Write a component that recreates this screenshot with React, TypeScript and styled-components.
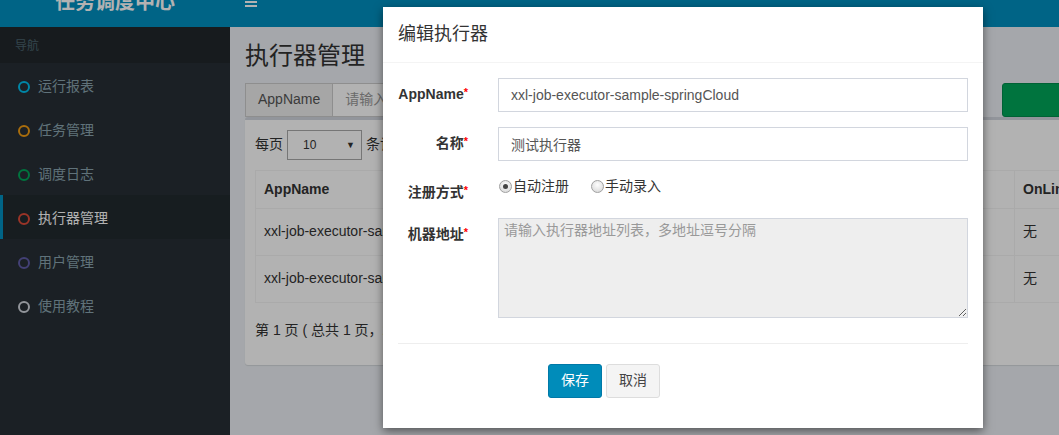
import React from "react";
import styled, { createGlobalStyle } from "styled-components";

const GlobalStyle = createGlobalStyle`
  html, body { margin: 0; padding: 0; overflow: hidden; background: #a5a8ab; }
  body {
    font-family: "Liberation Sans", "Noto Sans CJK SC", sans-serif;
    font-size: 14px;
    color: #333;
    line-height: 1.42857;
  }
  * { box-sizing: border-box; }
`;

const Page = styled.div`
  position: relative;
  width: 1366px;
  height: 435px;
  display: grid;
  grid-template-columns: 230px 1fr;
  grid-template-rows: 27px 1fr;
  overflow: hidden;
`;

const Logo = styled.div`
  background: #0090c1;
  display: flex;
  align-items: flex-end;
  overflow: hidden;
`;

const LogoText = styled.div`
  width: 100%;
  height: 50px;
  flex: none;
  line-height: 50px;
  text-align: center;
  font-size: 20px;
  font-weight: bold;
  color: #fff;
`;

const Navbar = styled.div`
  background: #0090c1;
  display: flex;
  align-items: flex-end;
  overflow: hidden;
`;

const Toggle = styled.div`
  margin-left: 15px;
  padding-bottom: 20px;
  display: flex;
  flex-direction: column;
  gap: 2px;
`;

const Bar = styled.span`
  display: block;
  width: 12px;
  height: 2px;
  background: #fff;
`;

const Sidebar = styled.aside`
  background: #272f35;
  display: flex;
  flex-direction: column;
`;

const SidebarHeader = styled.div`
  height: 36px;
  padding: 4px 15px 0;
  display: flex;
  align-items: center;
  background: #22282c;
  color: #4b646f;
  font-size: 12px;
`;

const MenuItem = styled.div<{ $active?: boolean }>`
  height: 44px;
  display: flex;
  align-items: center;
  gap: 8px;
  padding-top: 4px;
  padding-left: ${(p) => (p.$active ? "15px" : "18px")};
  border-left: ${(p) => (p.$active ? "3px solid #0090c1" : "none")};
  background: ${(p) => (p.$active ? "#222a2e" : "transparent")};
  color: ${(p) => (p.$active ? "#fff" : "#8aa4af")};
  font-size: 14px;
`;

const Ring = styled.span<{ $color: string }>`
  width: 12px;
  height: 12px;
  border-radius: 50%;
  border: 2px solid ${(p) => p.$color};
  flex: none;
`;

const Content = styled.main`
  background: #ecf0f5;
  padding: 15px;
  display: flex;
  flex-direction: column;
`;

const Title = styled.h1`
  margin: 1px 0 14px;
  font-size: 24px;
  font-weight: normal;
  line-height: 1.1;
  color: #333;
`;

const SearchRow = styled.div`
  display: grid;
  grid-template-columns: repeat(6, 1fr);
  margin: 0 -15px;
`;

const Col = styled.div<{ $span?: number; $start?: number }>`
  padding: 0 15px;
  grid-column: ${(p) => (p.$start ? `${p.$start} / span ${p.$span || 1}` : `span ${p.$span || 1}`)};
`;

const InputGroup = styled.div`
  display: flex;
  height: 34px;
`;

const Addon = styled.span`
  display: flex;
  align-items: center;
  padding: 0 12px;
  background: #eee;
  border: 1px solid #ccc;
  color: #555;
`;

const GroupInput = styled.div`
  flex: 1;
  display: flex;
  align-items: center;
  padding: 0 12px;
  border: 1px solid #ccc;
  border-left: none;
  background: #fff;
  color: #999;
`;

const SuccessButton = styled.div`
  height: 34px;
  border-radius: 3px;
  background: #00a65a;
  border: 1px solid #008d4c;
  color: #fff;
  display: flex;
  align-items: center;
  justify-content: center;
`;

const Box = styled.section`
  background: #fff;
  border-top: 3px solid #d2d6de;
  border-radius: 3px;
  box-shadow: 0 1px 1px rgba(0, 0, 0, 0.1);
  padding: 10px;
`;

const LengthRow = styled.div`
  display: flex;
  align-items: center;
  height: 30px;
  gap: 4px;
`;

const Select = styled.div`
  width: 75px;
  height: 30px;
  border: 1px solid #aaa;
  display: flex;
  align-items: center;
  justify-content: space-between;
  padding: 0 6px 0 15px;
  font-size: 12px;
  color: #333;
`;

const Arrow = styled.span`
  font-size: 9px;
`;

const Table = styled.table`
  margin-top: 10px;
  border-collapse: collapse;
  table-layout: fixed;
  width: 1086px;
`;

const Th = styled.th`
  height: 38px;
  padding: 1px 8px 0;
  border: 1px solid #f4f4f4;
  text-align: left;
  font-weight: bold;
  color: #333;
`;

const Td = styled.td`
  height: 47px;
  padding: 0 8px;
  border: 1px solid #f4f4f4;
  color: #333;
  white-space: nowrap;
  overflow: hidden;
`;

const Info = styled.div`
  padding: 18px 0 14px;
  color: #333;
`;

const Overlay = styled.div`
  position: absolute;
  inset: 0;
  background: rgba(0, 0, 0, 0.3);
  display: flex;
  justify-content: center;
  align-items: flex-start;
  padding-top: 7px;
`;

const Modal = styled.div`
  width: 600px;
  background: #fff;
  box-shadow: 0 3px 9px rgba(0, 0, 0, 0.5);
`;

const ModalHeader = styled.div`
  padding: 15px;
  border-bottom: 1px solid #f4f4f4;
`;

const ModalTitle = styled.h4`
  margin: 0;
  font-size: 18px;
  font-weight: normal;
  line-height: 25px;
  color: #333;
`;

const ModalBody = styled.div`
  padding: 15px 0;
`;

const FormRow = styled.div<{ $minHeight?: number }>`
  display: grid;
  grid-template-columns: 100px 500px;
  margin-bottom: 15px;
  min-height: ${(p) => (p.$minHeight ? `${p.$minHeight}px` : "auto")};
`;

const Label = styled.label`
  padding: 7px 15px 0;
  text-align: right;
  font-weight: bold;
  color: #333;
`;

const Star = styled.span`
  color: red;
  font-size: 11px;
  vertical-align: top;
  line-height: 14px;
`;

const Field = styled.div`
  padding: 0 15px;
`;

const TextInput = styled.input`
  display: block;
  width: 100%;
  height: 34px;
  padding: 6px 12px;
  border: 1px solid #d2d6de;
  border-radius: 0;
  font: inherit;
  color: #555;
  outline: none;
`;

const TextArea = styled.textarea`
  display: block;
  width: 100%;
  height: 100px;
  padding: 2px 5px;
  border: 1px solid #d2d6de;
  border-radius: 0;
  background: #eee;
  font: inherit;
  color: #555;
  outline: none;
  &::placeholder { color: #999; }
`;

const RadioGroup = styled.div`
  display: flex;
  align-items: center;
  gap: 22px;
  height: 22px;
  margin-left: 1px;
`;

const RadioLabel = styled.span`
  display: flex;
  align-items: center;
  gap: 1px;
  color: #333;
`;

const RadioDot = styled.span<{ $checked?: boolean }>`
  width: 13px;
  height: 13px;
  border-radius: 50%;
  border: 1px solid #a0a0a0;
  background: radial-gradient(circle at 50% 35%, #fdfdfd, #d4d4d4);
  display: flex;
  align-items: center;
  justify-content: center;
  &::after {
    content: "";
    width: 5px;
    height: 5px;
    border-radius: 50%;
    background: ${(p) => (p.$checked ? "#444" : "transparent")};
  }
`;

const Divider = styled.hr`
  margin: 25px 15px 20px;
  border: 0;
  border-top: 1px solid #eee;
`;

const ButtonRow = styled.div`
  display: flex;
  gap: 4px;
  padding-left: 165px;
  margin-bottom: 15px;
`;

const Button = styled.button<{ $primary?: boolean }>`
  height: 34px;
  padding: 0 12px;
  font: inherit;
  border-radius: 3px;
  border: 1px solid ${(p) => (p.$primary ? "#0079a8" : "#ddd")};
  background: ${(p) => (p.$primary ? "#008cba" : "#f4f4f4")};
  color: ${(p) => (p.$primary ? "#fff" : "#444")};
`;

const menu = [
  { label: "运行报表", color: "#00c0ef" },
  { label: "任务管理", color: "#f39c12" },
  { label: "调度日志", color: "#00a65a" },
  { label: "执行器管理", color: "#dd4b39", active: true },
  { label: "用户管理", color: "#605ca8" },
  { label: "使用教程", color: "#d2d6de" },
];

const rows = [
  ["xxl-job-executor-sample", "示例执行器", "1", "自动注册", "无", "编辑"],
  ["xxl-job-executor-sample-springCloud", "测试执行器", "2", "自动注册", "无", "编辑"],
];

export default function App() {
  return (
    <>
      <GlobalStyle />
      <Page>
        <Logo>
          <LogoText>任务调度中心</LogoText>
        </Logo>
        <Navbar>
          <Toggle>
            <Bar />
            <Bar />
            <Bar />
          </Toggle>
        </Navbar>
        <Sidebar>
          <SidebarHeader>导航</SidebarHeader>
          {menu.map((m) => (
            <MenuItem key={m.label} $active={m.active}>
              <Ring $color={m.color} />
              {m.label}
            </MenuItem>
          ))}
        </Sidebar>
        <Content>
          <Title>执行器管理</Title>
          <SearchRow>
            <Col $span={2}>
              <InputGroup>
                <Addon>AppName</Addon>
                <GroupInput>请输入AppName</GroupInput>
              </InputGroup>
            </Col>
            <Col $start={5}>
              <SuccessButton>+新增</SuccessButton>
            </Col>
          </SearchRow>
          <Box>
            <LengthRow>
              每页
              <Select>
                10<Arrow>▼</Arrow>
              </Select>
              条记录
            </LengthRow>
            <Table>
              <colgroup>
                <col style={{ width: 200 }} />
                <col style={{ width: 200 }} />
                <col style={{ width: 150 }} />
                <col style={{ width: 209 }} />
                <col style={{ width: 200 }} />
                <col />
              </colgroup>
              <thead>
                <tr>
                  <Th>AppName</Th>
                  <Th>名称</Th>
                  <Th>排序</Th>
                  <Th>注册方式</Th>
                  <Th>OnLine 机器地址</Th>
                  <Th>操作</Th>
                </tr>
              </thead>
              <tbody>
                {rows.map((r) => (
                  <tr key={r[0]}>
                    {r.map((c, i) => (
                      <Td key={i}>{c}</Td>
                    ))}
                  </tr>
                ))}
              </tbody>
            </Table>
            <Info>第 1 页 ( 总共 1 页，2 条记录 )</Info>
          </Box>
        </Content>
        <Overlay>
          <Modal>
            <ModalHeader>
              <ModalTitle>编辑执行器</ModalTitle>
            </ModalHeader>
            <ModalBody>
              <FormRow>
                <Label>
                  AppName<Star>*</Star>
                </Label>
                <Field>
                  <TextInput readOnly value="xxl-job-executor-sample-springCloud" />
                </Field>
              </FormRow>
              <FormRow>
                <Label>
                  名称<Star>*</Star>
                </Label>
                <Field>
                  <TextInput readOnly value="测试执行器" />
                </Field>
              </FormRow>
              <FormRow $minHeight={27}>
                <Label>
                  注册方式<Star>*</Star>
                </Label>
                <Field>
                  <RadioGroup>
                    <RadioLabel>
                      <RadioDot $checked />
                      自动注册
                    </RadioLabel>
                    <RadioLabel>
                      <RadioDot />
                      手动录入
                    </RadioLabel>
                  </RadioGroup>
                </Field>
              </FormRow>
              <FormRow>
                <Label>
                  机器地址<Star>*</Star>
                </Label>
                <Field>
                  <TextArea readOnly placeholder="请输入执行器地址列表，多地址逗号分隔" />
                </Field>
              </FormRow>
              <Divider />
              <ButtonRow>
                <Button $primary>保存</Button>
                <Button>取消</Button>
              </ButtonRow>
            </ModalBody>
          </Modal>
        </Overlay>
      </Page>
    </>
  );
}
